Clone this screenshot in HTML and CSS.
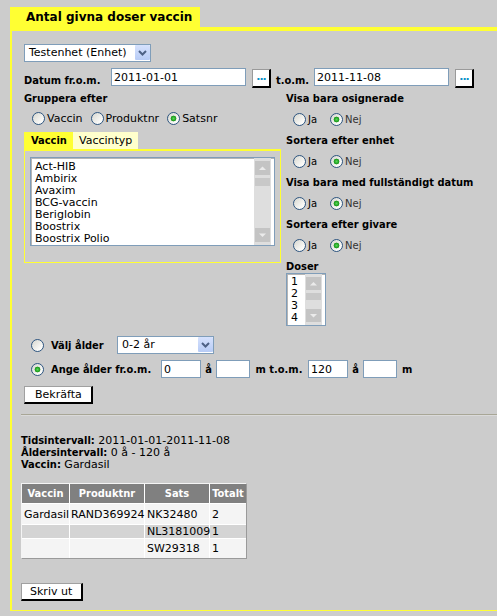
FILE: index.html
```html
<!DOCTYPE html>
<html lang="sv">
<head>
<meta charset="utf-8">
<title>Antal givna doser vaccin</title>
<link rel="stylesheet" href="styles.css">
</head>
<body>
<div class="tab">Antal givna doser vaccin</div>
<div class="panel">
  <div class="form">
    <div class="sel sel-unit"><span class="sel-text">Testenhet (Enhet)</span><span class="sel-btn"><svg width="15" height="15" viewBox="0 0 15 15"><path d="M4 6 L7.5 9.5 L11 6" fill="none" stroke="#4d6185" stroke-width="2"/></svg></span></div>
    <div class="daterow">
      <span class="lbl lbl-from">Datum fr.o.m.</span>
      <input class="txt txt-date" type="text" value="2011-01-01">
      <button type="button" class="dots">...</button>
      <span class="lbl lbl-tom">t.o.m.</span>
      <input class="txt txt-date" type="text" value="2011-11-08">
      <button type="button" class="dots">...</button>
    </div>
    <div class="cols">
      <div class="leftcol">
        <div class="lbl head">Gruppera efter</div>
        <div class="grp">
          <label class="opt"><input type="radio" class="rb" name="g"><span>Vaccin</span></label>
          <label class="opt"><input type="radio" class="rb" name="g"><span>Produktnr</span></label>
          <label class="opt"><input type="radio" class="rb" name="g" checked><span>Satsnr</span></label>
        </div>
        <div class="tabs"><span class="vtab vtab-on">Vaccin</span><span class="vtab">Vaccintyp</span></div>
        <div class="tabbox">
          <div class="listbox lb-vaccin">
            <div class="items">
              <div>Act-HIB</div>
              <div>Ambirix</div>
              <div>Avaxim</div>
              <div>BCG-vaccin</div>
              <div>Beriglobin</div>
              <div>Boostrix</div>
              <div>Boostrix Polio</div>
            </div>
            <div class="sb">
              <div class="sb-btn"><svg width="15" height="14" viewBox="0 0 15 14"><path d="M4 9 L7.5 5.5 L11 9 Z" fill="#ebebeb"/></svg></div>
              <div class="sb-thumb"></div>
              <div class="sb-fill"></div>
              <div class="sb-btn"><svg width="15" height="14" viewBox="0 0 15 14"><path d="M4 5.5 L7.5 9 L11 5.5 Z" fill="#ebebeb"/></svg></div>
            </div>
          </div>
        </div>
      </div>
      <div class="rightcol">
        <div class="lbl head">Visa bara osignerade</div>
        <div class="yn">
          <input type="radio" class="rb" name="a"><span class="yn-ja">Ja</span>
          <input type="radio" class="rb" name="a" checked><span class="yn-nej">Nej</span>
        </div>
        <div class="lbl head">Sortera efter enhet</div>
        <div class="yn">
          <input type="radio" class="rb" name="b"><span class="yn-ja">Ja</span>
          <input type="radio" class="rb" name="b" checked><span class="yn-nej">Nej</span>
        </div>
        <div class="lbl head">Visa bara med fullständigt datum</div>
        <div class="yn">
          <input type="radio" class="rb" name="c"><span class="yn-ja">Ja</span>
          <input type="radio" class="rb" name="c" checked><span class="yn-nej">Nej</span>
        </div>
        <div class="lbl head">Sortera efter givare</div>
        <div class="yn">
          <input type="radio" class="rb" name="d"><span class="yn-ja">Ja</span>
          <input type="radio" class="rb" name="d" checked><span class="yn-nej">Nej</span>
        </div>
        <div class="lbl head">Doser</div>
        <div class="listbox lb-doser">
          <div class="items">
            <div>1</div>
            <div>2</div>
            <div>3</div>
            <div>4</div>
          </div>
          <div class="sb">
            <div class="sb-btn sb-btn-s"><svg width="15" height="13" viewBox="0 0 15 13"><path d="M4 8.5 L7.5 5 L11 8.5 Z" fill="#ebebeb"/></svg></div>
            <div class="sb-thumb sb-thumb-s"></div>
            <div class="sb-fill"></div>
            <div class="sb-btn sb-btn-s"><svg width="15" height="13" viewBox="0 0 15 13"><path d="M4 5 L7.5 8.5 L11 5 Z" fill="#ebebeb"/></svg></div>
          </div>
        </div>
      </div>
    </div>
    <div class="agerow agerow-first">
      <input type="radio" class="rb rb-age" name="age">
      <span class="lbl age-lbl1">Välj ålder</span>
      <div class="sel sel-age"><span class="sel-text">0-2 år</span><span class="sel-btn"><svg width="15" height="15" viewBox="0 0 15 15"><path d="M4 6 L7.5 9.5 L11 6" fill="none" stroke="#4d6185" stroke-width="2"/></svg></span></div>
    </div>
    <div class="agerow">
      <input type="radio" class="rb rb-age" name="age" checked>
      <span class="lbl age-lbl2">Ange ålder fr.o.m.</span>
      <input class="txt txt-y" type="text" value="0">
      <span class="lbl unit">å</span>
      <input class="txt txt-m" type="text" value="">
      <span class="lbl unit-tom">m t.o.m.</span>
      <input class="txt txt-y" type="text" value="120">
      <span class="lbl unit">å</span>
      <input class="txt txt-m" type="text" value="">
      <span class="lbl unit-m">m</span>
    </div>
    <button type="button" class="btn btn-ok">Bekräfta</button>
  </div>
  <div class="rule"></div>
  <div class="summary">
    <div><b>Tidsintervall:</b> 2011-01-01-2011-11-08</div>
    <div><b>Åldersintervall:</b> 0 å - 120 å</div>
    <div><b>Vaccin:</b> Gardasil</div>
  </div>
  <table class="res">
    <colgroup><col class="c1"><col class="c2"><col class="c3"><col class="c4"></colgroup>
    <thead><tr class="rh"><th>Vaccin</th><th>Produktnr</th><th>Sats</th><th>Totalt</th></tr></thead>
    <tbody>
      <tr class="r1"><td>Gardasil</td><td>RAND369924</td><td>NK32480</td><td>2</td></tr>
      <tr class="r2"><td></td><td></td><td>NL3181009</td><td>1</td></tr>
      <tr class="r3"><td></td><td></td><td>SW29318</td><td>1</td></tr>
    </tbody>
  </table>
  <button type="button" class="btn btn-print">Skriv ut</button>
</div>
</body>
</html>
```

FILE: styles.css
```css
* { box-sizing: border-box; }
html, body { margin: 0; }
body {
  background: #cccccc;
  font-family: "DejaVu Sans", Verdana, sans-serif;
  font-size: 11px;
  color: #000;
  overflow: hidden;
  padding-top: 7px;
  height: 616px;
}
.tab {
  margin-left: 10px;
  width: 190px;
  height: 20px;
  background: #ffff33;
  font-weight: bold;
  font-size: 12px;
  line-height: 21px;
  padding-left: 16px;
  white-space: nowrap;
}
.panel {
  margin-left: 10px;
  width: 487px;
  border: solid #ffff33;
  border-width: 4px 0 1px 2px;
  padding: 13px 0 9px 9px;
}
.form { padding-left: 3px; }
.lbl,
.vtab-on,
.summary b,
.res th {
  font-family: "DejaVu Sans Condensed", "DejaVu Sans", Verdana, sans-serif;
  font-weight: bold;
  white-space: nowrap;
}

/* selects */
.sel {
  display: flex;
  align-items: stretch;
  height: 18px;
  border: 1px solid #7f9db9;
  background: #fff;
}
.sel-unit { width: 127px; }
.sel-age { width: 97px; }
.sel-text { flex: 1; padding-left: 4px; line-height: 16px; white-space: nowrap; }
.sel-btn {
  width: 15px;
  margin: 0 0 1px 0;
  background: linear-gradient(#d6e2fd, #b7cbf6);
  border-radius: 1px;
  display: flex;
}

/* inputs */
.txt {
  height: 18px;
  border: 1px solid #7f9db9;
  background: #fff;
  font: 11px "DejaVu Sans", Verdana, sans-serif;
  color: #000;
  padding: 0 2px;
  margin: 0;
  outline: none;
}
.txt-date { width: 135px; }
.txt-y { width: 40px; }
.txt-m { width: 34px; }

.daterow {
  display: flex;
  align-items: flex-start;
  margin-top: 6px;
  height: 20px;
}
.lbl-from { width: 87px; line-height: 13px; margin-top: 6px; }
.lbl-tom { width: 38px; margin-left: 5px; line-height: 13px; margin-top: 6px; }
.dots {
  width: 19px;
  height: 19px;
  margin: 1px 0 0 6px;
  padding: 0 0 3px;
  background: #fff;
  border-style: solid;
  border-width: 1px 2px 2px 1px;
  border-color: #9a9a9a #000 #000 #9a9a9a;
  color: #0a90c8;
  font: bold 11px "DejaVu Sans", Verdana, sans-serif;
  line-height: 12px;
  letter-spacing: -1px;
}

/* columns */
.cols { display: flex; margin-top: 4px; }
.leftcol { width: 257px; }
.rightcol { margin-left: 5px; }
.head { line-height: 13px; height: 13px; }

.rb {
  -webkit-appearance: none;
  appearance: none;
  margin: 0;
  width: 13px;
  height: 13px;
  border: 1px solid #2d5580;
  border-radius: 50%;
  background: linear-gradient(135deg, #d6d6cf, #fafaf8 75%);
  flex: none;
}
.rb:checked {
  background:
    radial-gradient(circle at 50% 50%, #5ad55a 0, #24a824 2px, #1e8f1e 2.6px, transparent 3.2px),
    linear-gradient(135deg, #d6d6cf, #fafaf8 75%);
}

.grp {
  display: flex;
  align-items: center;
  height: 27px;
  padding-left: 8px;
}
.opt { display: flex; align-items: center; margin-right: 8px; }
.opt span { margin-left: 2px; }

.tabs { display: flex; height: 17px; }
.vtab { line-height: 17px; padding: 0 6px; background: #ffffcc; }
.vtab-on { background: #ffff33; width: 49px; padding-left: 7px; }

.tabbox {
  width: 257px;
  border: 1px solid #ffff33;
  border-top-width: 2px;
  padding: 6px 5px 16px;
}

.listbox {
  display: flex;
  border: 1px solid #7f9db9;
  box-shadow: inset 1px 1px 0 #b5b5b5;
  background: #fff;
  padding-right: 3px;
}
.lb-vaccin { width: 245px; height: 89px; }
.lb-doser { width: 40px; height: 53px; }
.items { flex: 1; padding: 3px 0 0 4px; line-height: 12px; white-space: nowrap; overflow: hidden; }
.lb-doser .items { padding: 2px 0 0 4px; }
.sb {
  width: 17px;
  background: #dedede;
  padding: 3px 1px;
  display: flex;
  flex-direction: column;
}
.sb-btn { height: 14px; background: #c4c4c4; display: flex; flex: none; }
.sb-btn-s { height: 13px; }
.sb-thumb { height: 8px; margin-top: 3px; background: #c8c8c8; flex: none; }
.sb-thumb-s { height: 7px; }
.sb-fill { flex: 1; }

.yn {
  display: flex;
  align-items: center;
  height: 29px;
  padding-left: 7px;
  font-size: 10px;
}
.yn-ja { width: 22px; margin-left: 2px; }
.yn-nej { margin-left: 2px; color: #333; }

/* age rows */
.agerow {
  display: flex;
  align-items: center;
  height: 24px;
}
.agerow-first { margin-top: 7px; }
.rb-age { margin-left: 7px; }
.age-lbl1 { margin-left: 7px; width: 66px; }
.age-lbl2 { margin-left: 7px; width: 110px; }
.unit { width: 15px; text-align: center; }
.unit-tom { width: 58px; text-align: center; }
.unit-m { margin-left: 5px; }

.btn {
  display: block;
  background: #fff;
  border-style: solid;
  border-width: 1px 2px 2px 1px;
  border-color: #a0a0a0 #000 #000 #a0a0a0;
  font: 11px "DejaVu Sans", Verdana, sans-serif;
  color: #000;
  padding: 0;
  text-align: left;
}
.btn-ok { margin-top: 5px; width: 69px; height: 18px; padding-left: 10px; line-height: 14px; }
.btn-print { margin-top: 24px; width: 62px; height: 18px; padding-left: 8px; line-height: 14px; }

.rule {
  margin-top: 10px;
  height: 2px;
  border-top: 1px solid #a8a696;
  border-bottom: 1px solid #dadada;
}

.summary { margin-top: 19px; line-height: 12px; white-space: nowrap; }

.res {
  margin-top: 12px;
  width: 226px;
  table-layout: fixed;
  border-collapse: separate;
  border-spacing: 0;
  border-style: solid;
  border-width: 1px;
  border-color: #f4f4f4 #9a9a9a #9a9a9a #f4f4f4;
}
.res col.c1 { width: 48px; }
.res col.c2 { width: 75px; }
.res col.c3 { width: 65px; }
.res col.c4 { width: 36px; }
.res th, .res td {
  padding: 0 0 0 2px;
  border-right: 1px solid #fff;
  border-bottom: 1px solid #fff;
  white-space: nowrap;
  overflow: visible;
  font-size: 11px;
}
.res th:last-child, .res td:last-child { border-right: 0; }
.res tr:last-child td { border-bottom: 0; }
.res th { background: #808080; color: #fff; text-align: center; padding: 0; }
.res td { text-align: left; }
.rh { height: 20px; }
.r1 { height: 21px; background: #f4f4f4; }
.r2 { height: 14px; background: #d4d4d4; }
.r3 { height: 19px; background: #f4f4f4; }
.res td:nth-child(2) { padding-left: 1px; }
```
